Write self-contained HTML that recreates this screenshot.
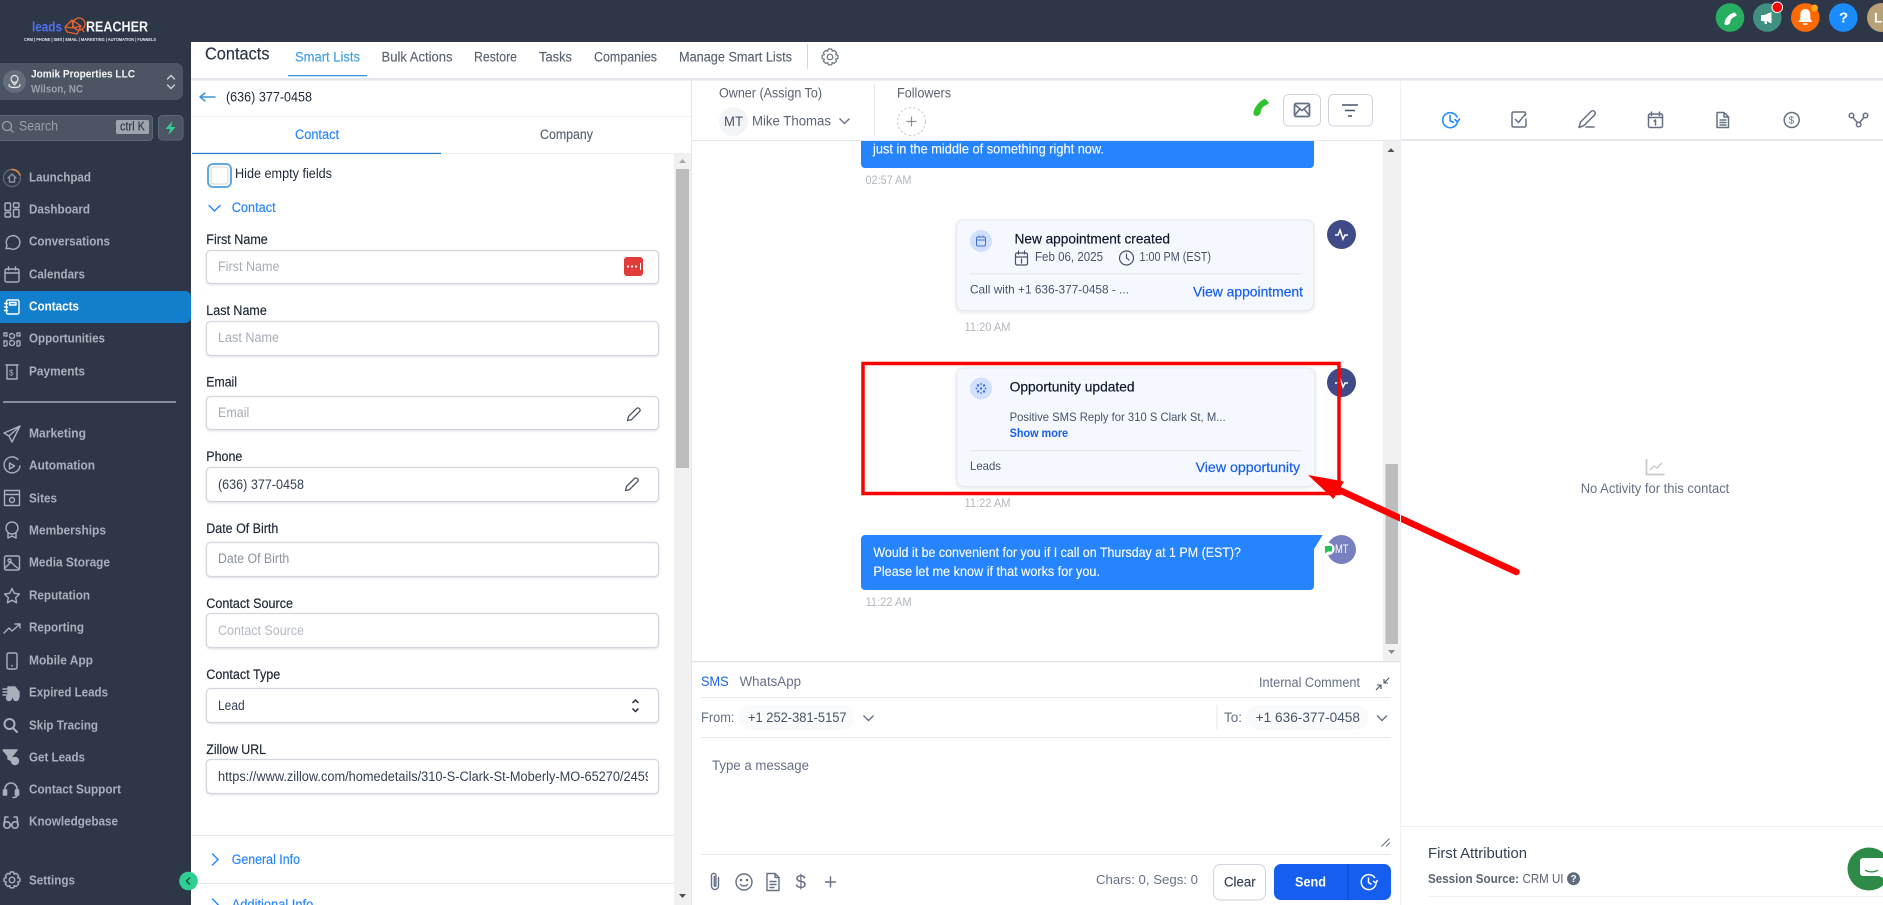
<!DOCTYPE html>
<html lang="en"><head><meta charset="utf-8"><title>Contacts</title>
<style>
html,body{margin:0;padding:0;width:1883px;height:905px;overflow:hidden;background:#fff}
svg{display:block}
text{font-family:"Liberation Sans",Arial,sans-serif;white-space:pre;transform:translateY(-.6px)}
.nav{font-size:13px;font-weight:700;fill:#a8b0bc}
.lbl{font-size:13.5px;fill:#1f2937;stroke:#1f2937;stroke-width:.2}
.ph{font-size:13.5px;fill:#a7adb7}
.val{font-size:13.5px;fill:#344054}
.tab{font-size:13.5px;fill:#5b6472;stroke:#5b6472;stroke-width:.15}
.blue{font-size:13.5px;fill:#2684ff;stroke:#2684ff;stroke-width:.15}
.msg{font-size:14px;fill:#fff;stroke:#fff;stroke-width:.12}
.tm{font-size:12px;fill:#b3b8bf}
.gr{font-size:13px;fill:#5b6472}
.lnk{font-size:14px;fill:#155eef;stroke:#155eef;stroke-width:.2}
.inp{fill:#fff;stroke:#d3d7df;stroke-width:1.2;filter:drop-shadow(0 1px 1px rgba(16,24,40,.12))}
.ic{fill:none;stroke:#a8b0bc;stroke-width:1.4;stroke-linecap:round;stroke-linejoin:round}
.ig{fill:none;stroke:#667085;stroke-width:1.5;stroke-linecap:round;stroke-linejoin:round}
.ln{stroke:#e6e8ec;stroke-width:1.2}
</style></head><body>
<svg xmlns="http://www.w3.org/2000/svg" width="1883" height="905" viewBox="0 0 1883 905">
<defs>
<clipPath id="zc"><rect x="218" y="760" width="430" height="33"/></clipPath>
</defs>
<rect width="1883" height="905" fill="#fff"/>
<!-- top bar + sidebar -->
<rect width="1883" height="42" fill="#2d3748"/>
<rect width="191" height="905" fill="#2d3748"/>

<!-- logo -->
<text x="32" y="32" font-size="14" font-weight="700" fill="#4f72f0" textLength="30" lengthAdjust="spacingAndGlyphs">leads</text>
<g fill="none" stroke="#e8632d" stroke-width="1.3" stroke-linejoin="round">
<path d="M65 27l7-7 9 6-4 8-10-2z M65 27l8 1 8-2 M72 20l1 8"/>
<circle cx="79" cy="24" r="6"/><path d="M82 29l2 3"/>
</g>
<text x="86" y="32" font-size="14.5" font-weight="700" fill="#f3f4f6" textLength="62" lengthAdjust="spacingAndGlyphs">REACHER</text>
<text x="24" y="41.5" font-size="4.5" font-weight="700" fill="#e5e7eb" textLength="132" lengthAdjust="spacingAndGlyphs">CRM | PHONE | SMS | EMAIL | MARKETING | AUTOMATION | FUNNELS</text>

<!-- location -->
<path d="M-8 63h184a7 7 0 0 1 7 7v23a7 7 0 0 1-7 7h-184z" fill="#4b5563"/>
<circle cx="14.5" cy="81.5" r="11.5" fill="#646d7b"/>
<g fill="none" stroke="#e5e7eb" stroke-width="1.2"><circle cx="14.5" cy="79" r="3.5"/><path d="M9.5 84c-1.500 2.500 1 3.500 5 3.500s6.500-1 5-3.500M12 82l2.500 3 2.500-3"/></g>
<text x="31" y="78" font-size="11" font-weight="700" fill="#f3f4f6" textLength="104" lengthAdjust="spacingAndGlyphs">Jomik Properties LLC</text>
<text x="31" y="93" font-size="11" font-weight="700" fill="#9aa2ae" textLength="52" lengthAdjust="spacingAndGlyphs">Wilson, NC</text>
<path d="M167.500 79l3.500-3.500 3.500 3.500M167.500 85l3.500 3.500 3.500-3.500" fill="none" stroke="#cbd0d8" stroke-width="1.4" stroke-linecap="round"/>

<!-- search -->
<path d="M-8 115.500h157a3.500 3.500 0 0 1 3.500 3.500v18a3.500 3.500 0 0 1-3.500 3.500h-157z" fill="#4b5563" stroke="#5e6776"/>
<circle cx="7" cy="126" r="4.500" fill="none" stroke="#98a0ac" stroke-width="1.3"/><path d="M10.500 129.500l3 3" stroke="#98a0ac" stroke-width="1.3"/>
<text x="19" y="131" font-size="13.5" fill="#98a0ac" textLength="39" lengthAdjust="spacingAndGlyphs">Search</text>
<rect x="116" y="120" width="33" height="14" rx="1.500" fill="#9ea5af"/>
<text x="120" y="131" font-size="12.500" fill="#1f2937" textLength="25" lengthAdjust="spacingAndGlyphs">ctrl K</text>
<rect x="158.500" y="115.500" width="24.500" height="24.500" rx="4" fill="#4b5563" stroke="#5e6776"/>
<path d="M172.500 121l-7 8h4.500l-1.500 6 7-8h-4.500z" fill="#2fcf94"/>

<!-- active nav -->
<path d="M0 291h185a6 6 0 0 1 6 6v20a6 6 0 0 1-6 6H0z" fill="#127fcc"/>

<!-- nav items -->
<text class="nav" x="29" y="182" textLength="62" lengthAdjust="spacingAndGlyphs">Launchpad</text>
<text class="nav" x="29" y="214" textLength="61" lengthAdjust="spacingAndGlyphs">Dashboard</text>
<text class="nav" x="29" y="246" textLength="81" lengthAdjust="spacingAndGlyphs">Conversations</text>
<text class="nav" x="29" y="279" textLength="56" lengthAdjust="spacingAndGlyphs">Calendars</text>
<text class="nav" x="29" y="311" textLength="50" lengthAdjust="spacingAndGlyphs" style="fill:#fff">Contacts</text>
<text class="nav" x="29" y="343" textLength="76" lengthAdjust="spacingAndGlyphs">Opportunities</text>
<text class="nav" x="29" y="376" textLength="56" lengthAdjust="spacingAndGlyphs">Payments</text>
<rect x="3" y="401.500" width="173" height="1" fill="#e5e7eb"/>
<text class="nav" x="29" y="438" textLength="57" lengthAdjust="spacingAndGlyphs">Marketing</text>
<text class="nav" x="29" y="470" textLength="66" lengthAdjust="spacingAndGlyphs">Automation</text>
<text class="nav" x="29" y="503" textLength="28" lengthAdjust="spacingAndGlyphs">Sites</text>
<text class="nav" x="29" y="535" textLength="77" lengthAdjust="spacingAndGlyphs">Memberships</text>
<text class="nav" x="29" y="567" textLength="81" lengthAdjust="spacingAndGlyphs">Media Storage</text>
<text class="nav" x="29" y="600" textLength="61" lengthAdjust="spacingAndGlyphs">Reputation</text>
<text class="nav" x="29" y="632" textLength="55" lengthAdjust="spacingAndGlyphs">Reporting</text>
<text class="nav" x="29" y="665" textLength="64" lengthAdjust="spacingAndGlyphs">Mobile App</text>
<text class="nav" x="29" y="697" textLength="79" lengthAdjust="spacingAndGlyphs">Expired Leads</text>
<text class="nav" x="29" y="730" textLength="69" lengthAdjust="spacingAndGlyphs">Skip Tracing</text>
<text class="nav" x="29" y="762" textLength="56" lengthAdjust="spacingAndGlyphs">Get Leads</text>
<text class="nav" x="29" y="794" textLength="92" lengthAdjust="spacingAndGlyphs">Contact Support</text>
<text class="nav" x="29" y="826" textLength="89" lengthAdjust="spacingAndGlyphs">Knowledgebase</text>
<text class="nav" x="29" y="885" textLength="46" lengthAdjust="spacingAndGlyphs">Settings</text>

<!-- nav icons -->
<g class="ic">
<g transform="translate(12,178)"><circle r="8.500" stroke="#5c6675"/><path d="M0-8.500A8.500 8.500 0 0 1 8 -3" stroke="#e8873a"/><path d="M-4 0l4-4 4 4M-2.500 0v4h5V0" stroke="#8b94a1"/></g>
<g transform="translate(12,210)"><rect x="-7" y="-7" width="5.500" height="7.500" rx="1"/><rect x="1.500" y="-7" width="5.500" height="4.500" rx="1"/><rect x="1.500" y="-.5" width="5.500" height="7.500" rx="1"/><rect x="-7" y="2.500" width="5.500" height="4.500" rx="1"/></g>
<g transform="translate(12,242)"><path d="M-6 6.500l1-3a6.800 6.800 0 1 1 3 3z"/></g>
<g transform="translate(12,275)"><rect x="-7" y="-6" width="14" height="13" rx="1.500"/><path d="M-7-2h14M-3.500-8v3M3.500-8v3"/></g>
<g transform="translate(12,307)" style="stroke:#fff"><rect x="-5.500" y="-7" width="12.500" height="14" rx="1.500"/><rect x="-2.500" y="-4.500" width="6.500" height="2.500"/><path d="M-7.500-3.500h3M-7.500 0h3M-7.500 3.500h3"/></g>
<g transform="translate(12,339)" stroke-dasharray="3 1.500"><circle cy="-3" r="2.500"/><circle cy="4" r="2.500"/><path d="M-8-6h3v3h-3zM5-6h3v3h-3zM-8 2h3v5h-3zM5 2h3v5h-3z"/></g>
<g transform="translate(12,372)"><path d="M-6-7h12M-5-7V7h10V-7"/></g>
<text x="9" y="376" font-size="8" fill="#a8b0bc" stroke="none">$</text>
<g transform="translate(12,434)"><path d="M8-8L-8-1l5 3 3 6zM8-8L-3 2"/></g>
<g transform="translate(12,466)"><path d="M6-6.500A8 8 0 1 0 8 0"/><path d="M-2.500-3v6l5-3z"/></g>
<g transform="translate(12,498)"><rect x="-7.500" y="-7.500" width="15" height="15"/><path d="M-7.500-3.500h15"/><circle cy="2" r="2.500"/></g>
<g transform="translate(12,530)"><circle cy="-2" r="6"/><path d="M-4 3v5l4-2 4 2V3"/></g>
<g transform="translate(12,563)"><rect x="-7.500" y="-7" width="15" height="14" rx="1.500"/><circle cx="-2.500" cy="-2.500" r="1.500"/><path d="M-7 5l6-6 4 4M3 3l4 3"/></g>
<g transform="translate(12,596)"><path d="M0-7.500l2.300 4.800 5.200.7-3.800 3.600.9 5.200L0 4.300-4.600 6.800l.9-5.200L-7.500-2l5.200-.7z"/></g>
<g transform="translate(12,628)"><path d="M-8 5l5-5 3 3 7-6M3-4h5v4"/></g>
<g transform="translate(12,661)"><rect x="-5" y="-8" width="10" height="16" rx="1.500"/><path d="M0 4.500v.5"/></g>
<g transform="translate(11,693)" fill="#a8b0bc"><path d="M-3-6h7l4 5v5H-3z" fill="#a8b0bc"/><path d="M-8-4h4M-8-1h4M-8 2h4"/><circle cx="-2" cy="5" r="2.500"/><circle cx="5" cy="5" r="2.500"/></g>
<g transform="translate(10,725)" style="stroke-width:2"><circle cx="-.5" cy="-1" r="5"/><path d="M3 3l4 4"/></g>
<g transform="translate(11,757)" fill="#a8b0bc"><path d="M-8-7h14l-5 6v5l-4-2V-1z" fill="#a8b0bc"/><circle cx="4" cy="4" r="3.500" fill="#a8b0bc"/></g>
<g transform="translate(11,790)" style="stroke-width:1.600"><path d="M-6 1v-2a6 6 0 0 1 12 0v2"/><rect x="-7.500" y="0" width="3" height="5" fill="#a8b0bc"/><rect x="4.500" y="0" width="3" height="5" fill="#a8b0bc"/><path d="M6 5c0 2-2 2.500-4 2.500"/></g>
<g transform="translate(11,822)" style="stroke-width:1.600"><circle cx="-4" cy="3" r="3.200"/><circle cx="4" cy="3" r="3.200"/><path d="M-7 3L-6-5h3M7 3L6-5H3M-1 3h2"/></g>
<g transform="translate(12,880)"><circle r="2.800"/><path d="M-1.700-8h3.400l.5 2.300 2-1 2.400 2.400-1 2 2.300.5v3.400l-2.300.5 1 2-2.400 2.400-2-1-.5 2.300h-3.400l-.5-2.300-2 1-2.400-2.400 1-2-2.300-.5v-3.400l2.300-.5-1-2 2.400-2.400 2 1z"/></g>
</g>

<!-- contacts header -->
<rect x="191" y="78" width="1692" height="2.500" fill="#e3e7ec"/>
<text x="205" y="60" font-size="17.500" fill="#2d3748" stroke="#2d3748" stroke-width=".2" textLength="64.500" lengthAdjust="spacingAndGlyphs">Contacts</text>
<text x="295" y="62" font-size="14" fill="#3f9fe4" stroke="#3f9fe4" stroke-width=".15" textLength="65" lengthAdjust="spacingAndGlyphs">Smart Lists</text>
<rect x="288" y="75" width="79" height="1.300" fill="#3b95dc"/>
<text class="tab" x="381.500" y="62" textLength="71" lengthAdjust="spacingAndGlyphs">Bulk Actions</text>
<text class="tab" x="474" y="62" textLength="43" lengthAdjust="spacingAndGlyphs">Restore</text>
<text class="tab" x="539" y="62" textLength="33" lengthAdjust="spacingAndGlyphs">Tasks</text>
<text class="tab" x="594" y="62" textLength="63" lengthAdjust="spacingAndGlyphs">Companies</text>
<text class="tab" x="679" y="62" textLength="113" lengthAdjust="spacingAndGlyphs">Manage Smart Lists</text>
<rect x="807" y="44" width="1" height="25" fill="#d3d7dd"/>
<g transform="translate(830,57)" class="ig" style="stroke-width:1.200;stroke:#6b7280"><circle r="2.800"/><path d="M-1.700-8h3.400l.5 2.300 2-1 2.400 2.400-1 2 2.300.5v3.400l-2.300.5 1 2-2.400 2.400-2-1-.5 2.300h-3.400l-.5-2.300-2 1-2.400-2.400 1-2-2.300-.5v-3.400l2.300-.5-1-2 2.400-2.400 2 1z"/></g>

<!-- left panel -->
<path d="M200 97h15M200 97l5-4M200 97l5 4" fill="none" stroke="#3b95dc" stroke-width="1.500" stroke-linecap="round"/>
<text x="226" y="102" font-size="14" fill="#1f2937" textLength="86" lengthAdjust="spacingAndGlyphs">(636) 377-0458</text>
<rect x="191" y="116" width="500" height="1" fill="#eceef1"/>
<text class="blue" x="295" y="139.500" textLength="44" lengthAdjust="spacingAndGlyphs">Contact</text>
<text class="tab" x="540" y="139.500" textLength="53" lengthAdjust="spacingAndGlyphs">Company</text>
<rect x="192" y="153" width="499" height="1" fill="#eceef1"/>
<rect x="192" y="152.800" width="249" height="1.300" fill="#2b83d0"/>
<!-- left scrollbar -->
<rect x="674" y="154" width="17" height="751" fill="#f1f1f1"/>
<rect x="676" y="169" width="13" height="299" fill="#bdbdbd"/>
<path d="M679 163l3.500-4 3.500 4z" fill="#a8a8a8"/>
<path d="M679 894l3.500 4 3.500-4z" fill="#505050"/>

<rect x="208" y="164" width="23" height="23" rx="5" fill="#fff" stroke="#5fa9e6" stroke-width="2"/>
<rect x="211" y="167" width="17" height="17" rx="3" fill="#fff" stroke="#d3d7df"/>
<text x="235" y="178.500" font-size="13.500" fill="#1f2937" textLength="97" lengthAdjust="spacingAndGlyphs">Hide empty fields</text>
<path d="M209 205.500l5.500 5.500 5.500-5.500" fill="none" stroke="#2684ff" stroke-width="1.400" stroke-linecap="round"/>
<text class="blue" x="231.700" y="212.500" textLength="44" lengthAdjust="spacingAndGlyphs">Contact</text>

<text class="lbl" x="206.300" y="244.500" textLength="61.500" lengthAdjust="spacingAndGlyphs">First Name</text>
<rect class="inp" x="206.500" y="250.500" width="452" height="33" rx="4"/>
<text class="ph" x="218" y="271.500" textLength="61.500" lengthAdjust="spacingAndGlyphs">First Name</text>
<rect x="624" y="257" width="19" height="19" rx="3" fill="#e03c3a"/>
<g fill="#fff"><circle cx="628" cy="266.500" r="1.100"/><circle cx="632" cy="266.500" r="1.100"/><circle cx="636" cy="266.500" r="1.100"/><rect x="640" y="263" width="1" height="7"/></g>

<text class="lbl" x="206.300" y="315.500" textLength="60.500" lengthAdjust="spacingAndGlyphs">Last Name</text>
<rect class="inp" x="206.500" y="321.500" width="452" height="34" rx="4"/>
<text class="ph" x="218" y="342.500" textLength="61" lengthAdjust="spacingAndGlyphs">Last Name</text>

<text class="lbl" x="206.300" y="387" textLength="30.700" lengthAdjust="spacingAndGlyphs">Email</text>
<rect class="inp" x="206.500" y="396.500" width="452" height="33" rx="4"/>
<text class="ph" x="218" y="417.500" textLength="31.300" lengthAdjust="spacingAndGlyphs">Email</text>
<path d="M627.500 420.500l1-4 8-8c1-1 2.300-.5 3 .2s1 2-.1 3l-8 8z" fill="none" stroke="#4b5563" stroke-width="1.300" stroke-linejoin="round"/>

<text class="lbl" x="206.300" y="461.500" textLength="36" lengthAdjust="spacingAndGlyphs">Phone</text>
<rect class="inp" x="206.500" y="467.500" width="452" height="34" rx="4"/>
<text class="val" x="218" y="489.500" textLength="86" lengthAdjust="spacingAndGlyphs">(636) 377-0458</text>
<path d="M625.500 490.500l1-4 8-8c1-1 2.300-.5 3 .2s1 2-.1 3l-8 8z" fill="none" stroke="#4b5563" stroke-width="1.300" stroke-linejoin="round"/>

<text class="lbl" x="206.300" y="533.500" textLength="72" lengthAdjust="spacingAndGlyphs">Date Of Birth</text>
<rect class="inp" x="206.500" y="542.500" width="452" height="34" rx="4"/>
<text class="ph" x="218" y="563.500" textLength="71.300" lengthAdjust="spacingAndGlyphs" style="fill:#8b929d">Date Of Birth</text>

<text class="lbl" x="206.300" y="608.500" textLength="86.700" lengthAdjust="spacingAndGlyphs">Contact Source</text>
<rect class="inp" x="206.500" y="613.500" width="452" height="34" rx="4"/>
<text class="ph" x="218" y="635.500" textLength="86" lengthAdjust="spacingAndGlyphs" style="fill:#b4b9c1">Contact Source</text>

<text class="lbl" x="206.300" y="679.500" textLength="74" lengthAdjust="spacingAndGlyphs">Contact Type</text>
<rect class="inp" x="206.500" y="688.500" width="452" height="34" rx="4"/>
<text class="val" x="218" y="710.500" textLength="26.700" lengthAdjust="spacingAndGlyphs">Lead</text>
<path d="M632.500 703l3-3 3 3M632.500 708.500l3 3 3-3" fill="none" stroke="#1f2937" stroke-width="1.500"/>

<text class="lbl" x="206.300" y="754.500" textLength="59.700" lengthAdjust="spacingAndGlyphs">Zillow URL</text>
<rect class="inp" x="206.500" y="759.500" width="452" height="34" rx="4"/>
<text class="val" x="218" y="781.500" textLength="434" lengthAdjust="spacingAndGlyphs" clip-path="url(#zc)">https://www.zillow.com/homedetails/310-S-Clark-St-Moberly-MO-65270/2459</text>

<rect x="192" y="835" width="482" height="1" fill="#e6e8ec"/>
<path d="M212.500 854l5.500 5.500-5.500 5.500" fill="none" stroke="#2684ff" stroke-width="1.400" stroke-linecap="round"/>
<text class="blue" x="231.700" y="864.500" textLength="68.300" lengthAdjust="spacingAndGlyphs">General Info</text>
<rect x="192" y="883" width="482" height="1" fill="#e6e8ec"/>
<path d="M212.500 899l5.500 5.500-5.500 5.500" fill="none" stroke="#2684ff" stroke-width="1.400" stroke-linecap="round"/>
<text class="blue" x="231.700" y="909.500" textLength="81.600" lengthAdjust="spacingAndGlyphs">Additional Info</text>

<!-- collapse -->
<circle cx="188.500" cy="881" r="9.300" fill="#2fcf94"/>
<path d="M190 877.500l-3.500 3.500 3.500 3.500" fill="none" stroke="#1f4d3d" stroke-width="1.400"/>

<!-- center header -->
<rect x="691" y="80" width="1" height="825" fill="#e6e8ec"/>
<text x="719" y="98" font-size="13.500" fill="#5b6472" textLength="103" lengthAdjust="spacingAndGlyphs">Owner (Assign To)</text>
<circle cx="733.500" cy="121.500" r="14.500" fill="#f2f4f7"/>
<text x="724" y="126.500" font-size="13.500" fill="#475467" textLength="19" lengthAdjust="spacingAndGlyphs">MT</text>
<text x="752" y="126" font-size="13.500" fill="#5b6472" textLength="79" lengthAdjust="spacingAndGlyphs">Mike Thomas</text>
<path d="M839.500 118.500l5 5 5-5" fill="none" stroke="#667085" stroke-width="1.400"/>
<rect x="874" y="84" width="1" height="52" fill="#e4e7ec"/>
<text x="897" y="98" font-size="13.500" fill="#5b6472" textLength="54" lengthAdjust="spacingAndGlyphs">Followers</text>
<circle cx="911.500" cy="121.500" r="14" fill="#fff" stroke="#c8ccd3" stroke-dasharray="2.500 2"/>
<path d="M906.500 121.500h10M911.500 116.500v10" stroke="#8a919c" stroke-width="1.200"/>
<path d="M1253.500 112c1-5 6-11 11-13 1.500 0 4 3 4.500 4-2 2-4.500 2.500-6 4-1.500 2-2.500 4-2.500 6-1 2-2.500 3-4 3-2 0-3.500-1.500-3-4z" fill="#2fc32f"/>
<rect x="1283.500" y="94.500" width="37" height="31.500" rx="5" fill="#fff" stroke="#d0d5dd"/>
<g fill="none" stroke="#667085" stroke-width="1.700" stroke-linejoin="round"><rect x="1294.500" y="103.500" width="15" height="13" rx="1.500"/><path d="M1294.500 104.500l7.500 6 7.500-6M1294.500 115.500l5-6M1309.500 115.500l-5-6"/></g>
<rect x="1328.500" y="94.500" width="44" height="31.500" rx="5" fill="#fff" stroke="#d0d5dd"/>
<path d="M1342 105h16M1345 110.500h10M1348 116h4" stroke="#475467" stroke-width="1.500" fill="none"/>
<rect x="692" y="140" width="1191" height="1" fill="#e6e8ec"/>

<!-- chat scrollbar -->
<rect x="1383" y="141" width="17" height="520" fill="#f1f1f1"/>
<rect x="1385.500" y="464" width="12.500" height="180" fill="#bdbdbd"/>
<path d="M1387.500 152l3.500-3.700 3.500 3.700z" fill="#505050"/>
<path d="M1388 650l3.500 4 3.500-4z" fill="#8a8a8a"/>

<!-- bubble 1 -->
<path d="M861 141h453v23a4 4 0 0 1-4 4H865a4 4 0 0 1-4-4z" fill="#2684ff"/>
<text class="msg" x="873" y="154" textLength="231" lengthAdjust="spacingAndGlyphs">just in the middle of something right now.</text>
<text class="tm" x="865.500" y="184.500" textLength="46" lengthAdjust="spacingAndGlyphs">02:57 AM</text>

<!-- card 1 -->
<rect x="956.500" y="220" width="357" height="90.500" rx="7" fill="#f5f8ff" stroke="#e6e9ef" style="filter:drop-shadow(0 1px 2px rgba(16,24,40,.12))"/>
<circle cx="981" cy="241" r="11" fill="#d1e0ff"/>
<g fill="none" stroke="#3d6fd8" stroke-width="1"><rect x="976.500" y="237" width="9" height="9" rx="1.500"/><path d="M976.500 240h9M979 235.500v2M983 235.500v2"/></g>
<text x="1014.500" y="244" font-size="14" fill="#101828" stroke="#101828" stroke-width=".2" textLength="155.500" lengthAdjust="spacingAndGlyphs">New appointment created</text>
<g class="ig" style="stroke-width:1.200;stroke:#475467"><rect x="1015.500" y="253" width="12" height="12" rx="1.500"/><path d="M1015.500 257h12M1018.500 251v3M1024.500 251v3M1021.500 259v4"/><circle cx="1126.500" cy="258" r="7"/><path d="M1126.500 254v4l2.500 2"/></g>
<text x="1035" y="261.500" font-size="12.500" fill="#475467" textLength="68" lengthAdjust="spacingAndGlyphs">Feb 06, 2025</text>
<text x="1139.500" y="261.500" font-size="12.500" fill="#475467" textLength="71.500" lengthAdjust="spacingAndGlyphs">1:00 PM (EST)</text>
<rect x="970" y="273" width="330" height="1.300" fill="#e4e7ec"/>
<text x="970" y="294" font-size="12" fill="#475467" textLength="159" lengthAdjust="spacingAndGlyphs">Call with +1 636-377-0458 - ...</text>
<text class="lnk" x="1193" y="297" textLength="110" lengthAdjust="spacingAndGlyphs">View appointment</text>
<text class="tm" x="964.500" y="331.500" textLength="46" lengthAdjust="spacingAndGlyphs">11:20 AM</text>
<circle cx="1341.500" cy="234.500" r="14.500" fill="#3f4a87"/>
<path d="M1335 235h3l2-5 3 9 2-4h3" fill="none" stroke="#fff" stroke-width="1.500"/>

<!-- card 2 -->
<rect x="956.700" y="368" width="358" height="118.500" rx="7" fill="#f5f8ff" stroke="#e6e9ef" style="filter:drop-shadow(0 1px 2px rgba(16,24,40,.12))"/>
<circle cx="981" cy="388.500" r="11" fill="#d1e0ff"/>
<g fill="#3d6fd8"><circle cx="978" cy="385.500" r="1.200"/><circle cx="984" cy="385.500" r="1.200"/><circle cx="978" cy="391.500" r="1.200"/><circle cx="984" cy="391.500" r="1.200"/><circle cx="981" cy="388.500" r="1.200"/><circle cx="981" cy="384" r=".9"/><circle cx="981" cy="393" r=".9"/><circle cx="976.500" cy="388.500" r=".9"/><circle cx="985.500" cy="388.500" r=".9"/></g>
<text x="1009.600" y="392" font-size="14" fill="#101828" stroke="#101828" stroke-width=".2" textLength="125" lengthAdjust="spacingAndGlyphs">Opportunity updated</text>
<text x="1009.600" y="421.500" font-size="12" fill="#475467" textLength="216" lengthAdjust="spacingAndGlyphs">Positive SMS Reply for 310 S Clark St, M...</text>
<text x="1009.600" y="437.500" font-size="11.500" font-weight="700" fill="#155eef" textLength="58.500" lengthAdjust="spacingAndGlyphs">Show more</text>
<rect x="970" y="450" width="332" height="1.300" fill="#e4e7ec"/>
<text x="970" y="470.500" font-size="12" fill="#475467" textLength="31" lengthAdjust="spacingAndGlyphs">Leads</text>
<text class="lnk" x="1195.600" y="472.500" textLength="104.500" lengthAdjust="spacingAndGlyphs">View opportunity</text>
<text class="tm" x="964.500" y="507.500" textLength="46" lengthAdjust="spacingAndGlyphs">11:22 AM</text>
<circle cx="1341.500" cy="382.500" r="14.500" fill="#3f4a87"/>
<path d="M1335 383h3l2-5 3 9 2-4h3" fill="none" stroke="#fff" stroke-width="1.500"/>

<!-- bubble 3 -->
<path d="M865 535h457.700l-8.700 14v37a4 4 0 0 1-4 4H865a4 4 0 0 1-4-4v-47a4 4 0 0 1 4-4z" fill="#2684ff"/>
<text class="msg" x="873.400" y="557.700" textLength="367.600" lengthAdjust="spacingAndGlyphs">Would it be convenient for you if I call on Thursday at 1 PM (EST)?</text>
<text class="msg" x="873.400" y="576.700" textLength="226.600" lengthAdjust="spacingAndGlyphs">Please let me know if that works for you.</text>
<text class="tm" x="865.600" y="606.500" textLength="46" lengthAdjust="spacingAndGlyphs">11:22 AM</text>
<circle cx="1341.500" cy="549.500" r="14.500" fill="#7880c0"/>
<circle cx="1328.500" cy="549" r="6" fill="#fff"/>
<path d="M1325 546h7v5.500h-4l-3 2z" fill="#22c55e"/>
<text x="1335" y="553.500" font-size="12" fill="#fff" textLength="13.500" lengthAdjust="spacingAndGlyphs">MT</text>

<!-- annotation -->
<rect x="863" y="363.500" width="476" height="130" fill="none" stroke="#f00" stroke-width="3.500"/>
<path d="M1335 488L1516.500 572" stroke="#f00" stroke-width="6.500" stroke-linecap="round" fill="none"/>
<path d="M1308 475l36 6.500-10.500 17.500z" fill="#f00"/>

<!-- composer -->
<rect x="692" y="661" width="708" height="1.300" fill="#dfe2e7"/>
<text x="701" y="686.500" font-size="13.500" fill="#155eef" textLength="27.600" lengthAdjust="spacingAndGlyphs">SMS</text>
<text x="739.600" y="686.500" font-size="13.500" fill="#667085" textLength="61.400" lengthAdjust="spacingAndGlyphs">WhatsApp</text>
<text x="1259" y="687.500" font-size="13.500" fill="#667085" textLength="101" lengthAdjust="spacingAndGlyphs">Internal Comment</text>
<path d="M1389 678l-5 5M1384 679v4h4M1376 690l5-5M1381 689v-4h-4" fill="none" stroke="#475467" stroke-width="1.100"/>
<rect x="701" y="697" width="690" height="1" fill="#e6e8ec"/>
<text x="701" y="722.500" font-size="13.500" fill="#667085" textLength="33.500" lengthAdjust="spacingAndGlyphs">From:</text>
<rect x="738.700" y="705" width="115.700" height="25" rx="12.500" fill="#f9fafb"/>
<text x="748" y="722.500" font-size="13.500" fill="#475467" textLength="98.600" lengthAdjust="spacingAndGlyphs">+1 252-381-5157</text>
<path d="M863.500 715.500l5 5 5-5" fill="none" stroke="#667085" stroke-width="1.400"/>
<rect x="1216.500" y="705" width="1" height="25" fill="#e6e8ec"/>
<text x="1224" y="722.500" font-size="13.500" fill="#667085" textLength="18" lengthAdjust="spacingAndGlyphs">To:</text>
<rect x="1246.500" y="705" width="122" height="25" rx="12.500" fill="#f9fafb"/>
<text x="1255.700" y="722.500" font-size="13.500" fill="#475467" textLength="104.300" lengthAdjust="spacingAndGlyphs">+1 636-377-0458</text>
<path d="M1377 715.500l5 5 5-5" fill="none" stroke="#667085" stroke-width="1.400"/>
<rect x="701" y="737" width="690" height="1" fill="#e6e8ec"/>
<text x="712" y="770.800" font-size="13.500" fill="#667085" textLength="97" lengthAdjust="spacingAndGlyphs">Type a message</text>
<path d="M1381.500 846.500l8-8M1386 846.500l4-4" stroke="#667085" stroke-width="1"/>
<rect x="701" y="854" width="690" height="1" fill="#e6e8ec"/>
<g class="ig" style="stroke-width:1.400">
<path d="M718.500 878v8.500a3.500 3.500 0 0 1-7 0V876a2.200 2.200 0 0 1 4.400 0v10a.8.800 0 0 1-1.600 0v-9" transform="translate(0,-.5)"/>
<circle cx="744" cy="882" r="8"/><circle cx="741" cy="880" r=".6"/><circle cx="747" cy="880" r=".6"/><path d="M740.500 884.500c1.500 2 5.500 2 7 0"/>
<path d="M767 873.500h8l4 4v13h-12zM775 873.500v4h4M770 881.500h6M770 884.500h6M770 887.500h4"/>
<path d="M825.500 882h10M830.500 877v10"/>
</g>
<text x="795.500" y="889" font-size="19" fill="#667085">$</text>
<text x="1096" y="884.500" font-size="13" fill="#667085" textLength="102" lengthAdjust="spacingAndGlyphs">Chars: 0, Segs: 0</text>
<rect x="1213.500" y="864.500" width="52" height="35.500" rx="7" fill="#fff" stroke="#d0d5dd"/>
<text x="1224" y="887" font-size="13.500" fill="#344054" stroke="#344054" stroke-width=".15" textLength="31.600" lengthAdjust="spacingAndGlyphs">Clear</text>
<rect x="1274" y="864" width="117" height="36" rx="7" fill="#155eef"/>
<rect x="1347.500" y="864" width="1" height="36" fill="#0d4bc9"/>
<text x="1295" y="887" font-size="13.500" font-weight="700" fill="#fff" textLength="31" lengthAdjust="spacingAndGlyphs">Send</text>
<g fill="none" stroke="#fff" stroke-width="1.500"><path d="M1375 878a7.500 7.500 0 1 0 1 6"/><path d="M1368.500 877.500v5l3 2"/><path d="M1373 881l3 2 1.500-3"/></g>

<!-- top right actions -->
<circle cx="1730" cy="17.500" r="14.300" fill="#27ae60"/>
<path d="M1724.500 23c.6-4.500 4.500-9 9.500-10.500 1.200 0 2.500 1.800 2.800 2.800-1.500 1.500-3.500 1.800-4.700 3-1.200 1.300-2 3-2 4.500-.8 1.500-2 2.200-3.200 2.200-1.700 0-2.700-.9-2.400-2z" fill="#fff"/>
<circle cx="1767.300" cy="17.500" r="14.300" fill="#3f9080"/>
<path d="M1761 15v6h3l1 3h2l-.5-3 5 2.500V12l-7 3z" fill="#fff"/>
<circle cx="1777.300" cy="7.300" r="5.300" fill="#f00" stroke="#fff" stroke-width="1"/>
<circle cx="1805.300" cy="17.500" r="14.300" fill="#ff6a00"/>
<path d="M1805.300 9c-3.500 0-5 3-5 6v4l-2 3h14l-2-3v-4c0-3-1.500-6-5-6z" fill="#fff"/><path d="M1803 24h4.500" stroke="#fff" stroke-width="1.500"/>
<circle cx="1814.500" cy="8" r="3.500" fill="#ffa51f"/>
<circle cx="1843.300" cy="17.500" r="14.300" fill="#1a8cff"/>
<text x="1839" y="23" font-size="15" font-weight="700" fill="#fff">?</text>
<circle cx="1881.500" cy="17.500" r="14.500" fill="#b8a078"/>
<text x="1874" y="23" font-size="13.500" font-weight="700" fill="#fff">LS</text>

<!-- right panel -->
<rect x="1400" y="80" width="1" height="825" fill="#eef1f5"/>
<g fill="none" stroke="#2a8dff" stroke-width="1.600" stroke-linecap="round" stroke-linejoin="round">
<path d="M1457 117a7.500 7.500 0 1 0 .5 5"/><path d="M1450 115.500v5l3.500 2"/><path d="M1455 119.500l2.500 2.500 2-3"/>
</g>
<g class="ig">
<path d="M1525.500 115v-1.500a2 2 0 0 0-.5-1.500h-11.500a1.500 1.500 0 0 0-1.500 1.500v12a1.500 1.500 0 0 0 1.500 1.500h11a1.500 1.500 0 0 0 1.500-1.500V119"/><path d="M1515.500 119.500l3 3 7-8.500"/>
<path d="M1579 127.500l1.500-5.500 10.500-10.500c1-1 2.500-1 3.500 0s1 2.500 0 3.500L1584 125.500zM1586 127h8"/>
<rect x="1648.500" y="114" width="14" height="13.500" rx="1.500"/><path d="M1648.500 117.500h14M1651.500 112v3.500M1659.500 112v3.500M1655.500 120v5M1654 121l1.500-1"/>
<path d="M1717 112.500h7l4.500 4.500v10.500h-11.500zM1724 112.500v4.500h4.500M1720 120h6M1720 122.500h6M1720 125h6"/>
<circle cx="1791.700" cy="120" r="7.500"/>
<circle cx="1851.500" cy="115.500" r="2.300"/><circle cx="1865.500" cy="115.500" r="2.300"/><circle cx="1858.700" cy="124.500" r="2.300"/><path d="M1853.500 116.500h0M1853 117.500l4.300 5M1864 117.500l-4.300 5"/>
</g>
<text x="1788.500" y="124" font-size="10" fill="#667085">$</text>
<rect x="1401" y="139" width="482" height="1" fill="#e6e8ec"/>

<g fill="none" stroke="#c4c8ce" stroke-width="1.700"><path d="M1646.500 459v15.500h18"/><path d="M1650 470l4-4 3 2 5-5" stroke-width="1.300"/></g>
<text x="1580.700" y="493.500" font-size="13.500" fill="#667085" textLength="148.600" lengthAdjust="spacingAndGlyphs">No Activity for this contact</text>

<rect x="1401" y="826" width="482" height="1" fill="#eef1f5"/>
<text x="1428" y="858.500" font-size="14.500" fill="#344054" textLength="99" lengthAdjust="spacingAndGlyphs">First Attribution</text>
<text x="1428" y="883.500" font-size="12.500" font-weight="700" fill="#5b6472" textLength="91" lengthAdjust="spacingAndGlyphs">Session Source:</text>
<text x="1522.500" y="883.500" font-size="12.500" fill="#5b6472" textLength="41" lengthAdjust="spacingAndGlyphs">CRM UI</text>
<circle cx="1573.500" cy="878.700" r="6.500" fill="#5f6b7a"/>
<text x="1570.500" y="882.500" font-size="10" font-weight="700" fill="#fff">?</text>
<rect x="1428" y="896" width="455" height="1" fill="#eef1f5"/>

<!-- chat widget -->
<circle cx="1869" cy="869" r="21.500" fill="#2e8b47"/>
<path d="M1863 858h20v20l-4-2h-16a3 3 0 0 1-3-3v-12a3 3 0 0 1 3-3z" fill="#fff"/>
<path d="M1865 870c3 2.500 10 2.500 13 0" fill="none" stroke="#2e8b47" stroke-width="1.300"/>
</svg>
</body></html>
